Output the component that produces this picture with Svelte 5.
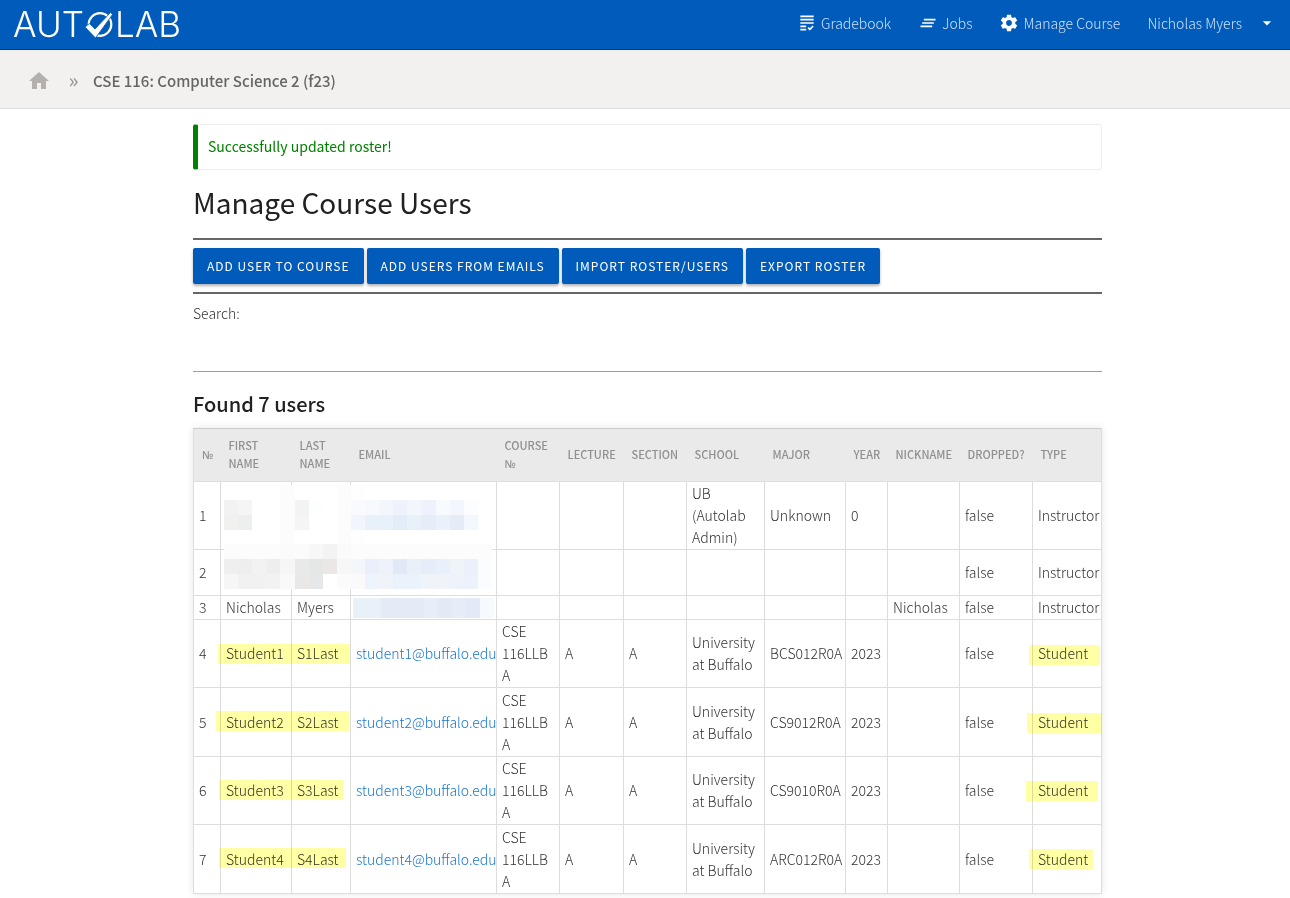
<script>
	const columns = [
		{ label: '№', width: 27 },
		{ label: 'First Name', width: 71 },
		{ label: 'Last Name', width: 59 },
		{ label: 'Email', width: 146 },
		{ label: 'Course №', width: 63 },
		{ label: 'Lecture', width: 64 },
		{ label: 'Section', width: 63 },
		{ label: 'School', width: 78 },
		{ label: 'Major', width: 81 },
		{ label: 'Year', width: 42 },
		{ label: 'Nickname', width: 72 },
		{ label: 'Dropped?', width: 73 },
		{ label: 'Type', width: 69 }
	];

	const ub = 'University at Buffalo';
	const users = [
		{ size: 'admin', school: 'UB (Autolab Admin)', major: 'Unknown', year: '0', type: 'Instructor' },
		{ size: 'medium', type: 'Instructor' },
		{ size: 'small', first: 'Nicholas', last: 'Myers', nickname: 'Nicholas', type: 'Instructor' },
		...['BCS012R0A', 'CS9012R0A', 'CS9010R0A', 'ARC012R0A'].map((major, i) => ({
			size: 'student',
			first: `Student${i + 1}`,
			last: `S${i + 1}Last`,
			email: `student${i + 1}@buffalo.edu`,
			course: 'CSE 116LLB A',
			lecture: 'A',
			section: 'A',
			school: ub,
			major,
			year: '2023',
			type: 'Student'
		}))
	];

	const buttons = ['Add user to course', 'Add users from emails', 'Import roster/users', 'Export roster'];

	// Mosaic over the private names, one colour per tile
	const tileX = [31, 45, 59, 73, 87, 102, 116, 130, 144, 158, 172, 186, 200, 214, 228, 243, 257, 271, 285, 299];
	const tileY = [57, 72, 87, 102, 116, 131, 146, 161];
	const mosaic = [
		'fff fff fff fff fcfcfc fff fff fff fcfcfc fefefe fff fff fff fff fff fff fff fff fff',
		'f2f2f2 f5f5f5 fff fff fcfcfc f3f3f3 fdffff fff fcfcfc f9fafd f8f9fe f3f6fd eef2fd f3f6fd eef2fd f8fbfe f3f6fd fcfdfe fff',
		'f1f1ef ecefee fff fff fcfcfc f5f5f5 fff fff fcfcfc f2f6fc e8f0fa e8f0fa e2edf8 e8f0fa e5edf7 eaf1fa e5ecf7 f2f8fd fff',
		'fff fff fff fff fcfcfc fff fff fff fcfcfc fefefe fff fff fff fff fff fff fff fff fff',
		'fcfcfc fcfcfc fcfcfc fcfcfc fbfbfb fbfbfb f7f7f7 f3f3f3 fafafa fcfcfc fcfcfc fcfcfc fcfcfc fcfcfc fcfcfc fcfcfc fcfcfc fcfcfc fcfcfc',
		'efefef eee f2f2f2 eee f6f6f6 e9e9e9 e5e7e7 eae7e6 f7f7f7 f3f6fa eaf0fb edf2fb e2e9f6 e8f0f9 e5edf9 e8f1fb eff4f8 eaf1fb fbfcff',
		'f6f6f6 f1f1f1 f1f1f1 f2f2f2 f9f9f9 eae8e6 e5e7e9 fff fbfbfb fafafa eef4fe f0f4f8 eaf3fb eaf2fb eff4f9 f0f4f8 eef3fb ecf2fc fafcff'
	].map((row) => row.split(' '));

	const emailTiles = [
		[160, 28, '#e8f0f8'],
		[188, 43, '#e2ebf6'],
		[231, 14, '#e6eef9'],
		[245, 14, '#e2eaf5'],
		[259, 14, '#e5edf8'],
		[273, 14, '#e2e9f7'],
		[287, 14, '#f6f9fd']
	];

	const marks = [
		[25, 216, 132],
		[23, 283, 133],
		[26, 352, 124],
		[26, 420, 127],
		[836, 217, 71],
		[834, 285, 75],
		[833, 353, 72],
		[836, 421, 64]
	];

	let search = $state('');
</script>

<header>
	<a class="logo" href="/" aria-label="Autolab">
		<svg width="178" height="44" viewBox="0 0 178 44">
			<text x="0" y="34">AUT</text>
			<circle cx="87" cy="21.500" r="11.300" fill="none" stroke="#fff" stroke-width="2.200" />
			<path d="M72 24l4.500-3.500 5.500 5.500L97.500 9.500l2 2L82.500 35z" stroke="#005bbb" stroke-width="0.800" />
			<text x="102" y="34">LAB</text>
		</svg>
	</a>
	<nav>
		<a href="#gradebook">
			<svg width="20" height="20" viewBox="0 0 24 24"><path d="M4 7h16v2H4zM4 13h16v-2H4zM4 17h7v-2H4zM4 21h7v-2H4zM15.410 18.170 14 16.750l-1.410 1.410L15.410 21 20 16.420 18.580 15zM4 3v2h16V3z" /></svg>
			Gradebook
		</a>
		<a href="#jobs">
			<svg width="20" height="20" viewBox="0 0 24 24"><path d="M5 13h14v-2H5v2zm-2 4h14v-2H3v2zM7 7v2h14V7H7z" /></svg>
			Jobs
		</a>
		<a href="#manage">
			<svg width="20" height="20" viewBox="0 0 24 24"><path d="M19.430 12.980c.04-.32.07-.64.07-.98s-.03-.66-.07-.98l2.110-1.650c.19-.15.24-.42.12-.64l-2-3.460c-.12-.22-.39-.3-.61-.22l-2.490 1c-.52-.4-1.080-.73-1.690-.98l-.38-2.650C14.460 2.180 14.250 2 14 2h-4c-.25 0-.46.18-.49.42l-.38 2.650c-.61.25-1.170.59-1.690.98l-2.490-1c-.23-.09-.49 0-.61.22l-2 3.460c-.13.22-.07.49.12.64l2.110 1.650c-.04.32-.07.65-.07.98s.03.66.07.98l-2.110 1.650c-.19.15-.24.42-.12.64l2 3.460c.12.22.39.3.61.22l2.490-1c.52.4 1.080.73 1.690.98l.38 2.650c.03.24.24.42.49.42h4c.25 0 .46-.18.49-.42l.38-2.650c.61-.25 1.170-.59 1.690-.98l2.490 1c.23.09.49 0 .61-.22l2-3.460c.12-.22.07-.49-.12-.64l-2.110-1.650zM12 15.500c-1.930 0-3.500-1.570-3.500-3.500s1.570-3.500 3.500-3.500 3.500 1.570 3.500 3.500-1.570 3.500-3.500 3.500z" /></svg>
			Manage Course
		</a>
		<a class="account" href="#account">
			Nicholas Myers
			<svg width="20" height="20" viewBox="0 0 24 24"><path d="M7 10l5 5 5-5z" /></svg>
		</a>
	</nav>
</header>

<div class="breadcrumb">
	<a href="/" aria-label="Home">
		<svg width="24" height="24" viewBox="0 0 24 24"><path d="M10 20v-6h4v6h5v-8h3L12 3 2 12h3v8z" /></svg>
	</a>
	<span class="sep">»</span>
	<a href="#course">CSE 116: Computer Science 2 (f23)</a>
</div>

<main>
	<p class="flash">Successfully updated roster!</p>
	<h1>Manage Course Users</h1>

	<div class="actions">
		{#each buttons as label}
			<button type="button">{label}</button>
		{/each}
	</div>

	<div class="search">
		<label for="search">Search:</label>
		<input id="search" type="text" bind:value={search} />
	</div>

	<h2>Found 7 users</h2>

	<div class="roster">
		<table>
			<colgroup>
				{#each columns as col}
					<col style:width="{col.width}px" />
				{/each}
			</colgroup>
			<thead>
				<tr>
					{#each columns as col}
						<th>{col.label.replace('№', '')}{#if col.label.includes('№')}<span class="numero">№</span>{/if}</th>
					{/each}
				</tr>
			</thead>
			<tbody>
				{#each users as user, i}
					<tr class={user.size}>
						<td>{i + 1}</td>
						<td>{user.first ?? ''}</td>
						<td>{user.last ?? ''}</td>
						<td>{#if user.email}<a href="mailto:{user.email}">{user.email}</a>{/if}</td>
						<td>{user.course ?? ''}</td>
						<td>{user.lecture ?? ''}</td>
						<td>{user.section ?? ''}</td>
						<td>{user.school ?? ''}</td>
						<td>{user.major ?? ''}</td>
						<td>{user.year ?? ''}</td>
						<td>{user.nickname ?? ''}</td>
						<td>false</td>
						<td>{user.type}</td>
					</tr>
				{/each}
			</tbody>
		</table>

		<svg class="overlay" viewBox="0 0 909 466" preserveAspectRatio="none" shape-rendering="crispEdges" aria-hidden="true">
			{#each mosaic as row, r}
				{#each row as color, c}
					<rect x={tileX[c]} y={tileY[r]} width={tileX[c + 1] - tileX[c]} height={tileY[r + 1] - tileY[r]} fill="#{color}" />
				{/each}
			{/each}
			{#each emailTiles as [x, width, fill]}
				<rect {x} y="170" {width} height="20" {fill} />
			{/each}
		</svg>
		<svg class="overlay marker" viewBox="0 0 909 466" preserveAspectRatio="none" shape-rendering="crispEdges" aria-hidden="true">
			{#each marks as [x, y, width]}
				<rect {x} {y} {width} height="20" fill="#ffffa6" />
			{/each}
		</svg>
	</div>
</main>

<style>
	:global(body) {
		margin: 0;
		background: #fff;
		color: #333;
		font-family: "Noto Sans CJK SC", "Noto Sans", sans-serif;
		font-size: 14px;
		font-weight: 300;
		line-height: 22px;
	}

	a {
		color: inherit;
		text-decoration: none;
	}

	svg {
		fill: currentColor;
		flex: none;
	}

	header {
		display: flex;
		align-items: center;
		justify-content: space-between;
		box-sizing: border-box;
		height: 50px;
		padding: 0 13px 2px;
		border-bottom: 1px solid #00417f;
		background: #005bbb;
		color: #fff;
	}

	.logo svg {
		display: block;
		margin-top: 3px;
		font-family: Inter, sans-serif;
		font-size: 35px;
		font-weight: 300;
	}

	nav {
		display: flex;
		align-items: center;
		gap: 27px;
		padding-bottom: 1px;
	}

	nav a {
		display: flex;
		align-items: center;
		gap: 4px;
		color: #cce0f5;
	}

	nav svg {
		color: #fff;
	}

	nav .account {
		gap: 15px;
	}

	.breadcrumb {
		display: flex;
		align-items: center;
		box-sizing: border-box;
		height: 59px;
		padding: 4px 27px 0;
		border-bottom: 1px solid #ddd;
		background: #f2f1ef;
		color: #666;
		font-size: 15px;
		font-weight: 500;
	}

	.breadcrumb svg {
		display: block;
		color: #b3b0ae;
	}

	.sep {
		box-sizing: border-box;
		width: 42px;
		padding: 0 0 3px 3px;
		color: #999;
		font-size: 20px;
		font-weight: 500;
		text-align: center;
	}

	main {
		margin: 15px 188px 5px 193px;
	}

	.flash {
		box-sizing: border-box;
		margin: 0;
		padding: 10px 10px 12px;
		border: 1px solid #eee;
		border-left: 5px solid green;
		border-radius: 3px;
		color: green;
		font-weight: 400;
	}

	h1, h2 {
		margin: 0;
		color: #212121;
	}

	h1 {
		padding: 13px 0 16px;
		font-size: 28px;
		font-weight: 400;
		line-height: 39px;
	}

	.actions {
		display: flex;
		flex-wrap: wrap;
		gap: 3px;
		padding: 8px 0;
		border: solid #666;
		border-width: 2px 0;
	}

	button {
		height: 36px;
		padding: 0 14px;
		border: 0;
		border-radius: 2px;
		background: #005bbb;
		box-shadow: 0 2px 3px rgba(0, 0, 0, 0.3);
		color: #fff;
		font: 400 12px/36px "Noto Sans CJK SC", sans-serif;
		letter-spacing: 1px;
		text-transform: uppercase;
	}

	.search {
		padding-top: 8px;
	}

	.search label,
	.search input {
		display: block;
	}

	.search input {
		box-sizing: border-box;
		width: 100%;
		height: 48px;
		padding: 0;
		border: 0;
		border-bottom: 1px solid #9e9e9e;
		background: none;
		outline: none;
	}

	h2 {
		padding: 17px 0 9px;
		font-size: 20px;
		font-weight: 500;
		line-height: 30px;
	}

	.roster {
		position: relative;
		box-shadow: 0 0 8px rgba(0, 0, 0, 0.1);
	}

	table {
		width: 100%;
		border: 1px solid #ddd;
		border-top-color: #ccc;
		border-collapse: collapse;
		table-layout: fixed;
	}

	th {
		box-sizing: border-box;
		height: 53px;
		padding: 0 8px 2px;
		background: #eaeaea;
		color: #8f8f8f;
		font-size: 11px;
		font-weight: 500;
		line-height: 18px;
		text-align: left;
		text-transform: uppercase;
	}

	.numero {
		font-family: "Noto Sans", sans-serif;
	}

	td {
		padding: 0 5px 1px;
		border: 1px solid #ddd;
	}

	td a {
		color: #1976d2;
	}

	.admin {
		height: 68px;
	}

	.medium {
		height: 46px;
	}

	.small {
		height: 24px;
	}

	.student {
		height: 68px;
	}

	.student:nth-child(odd) {
		height: 69px;
	}

	.overlay {
		position: absolute;
		inset: 0;
		width: 100%;
		height: 100%;
		pointer-events: none;
	}

	.marker {
		mix-blend-mode: multiply;
	}
</style>
